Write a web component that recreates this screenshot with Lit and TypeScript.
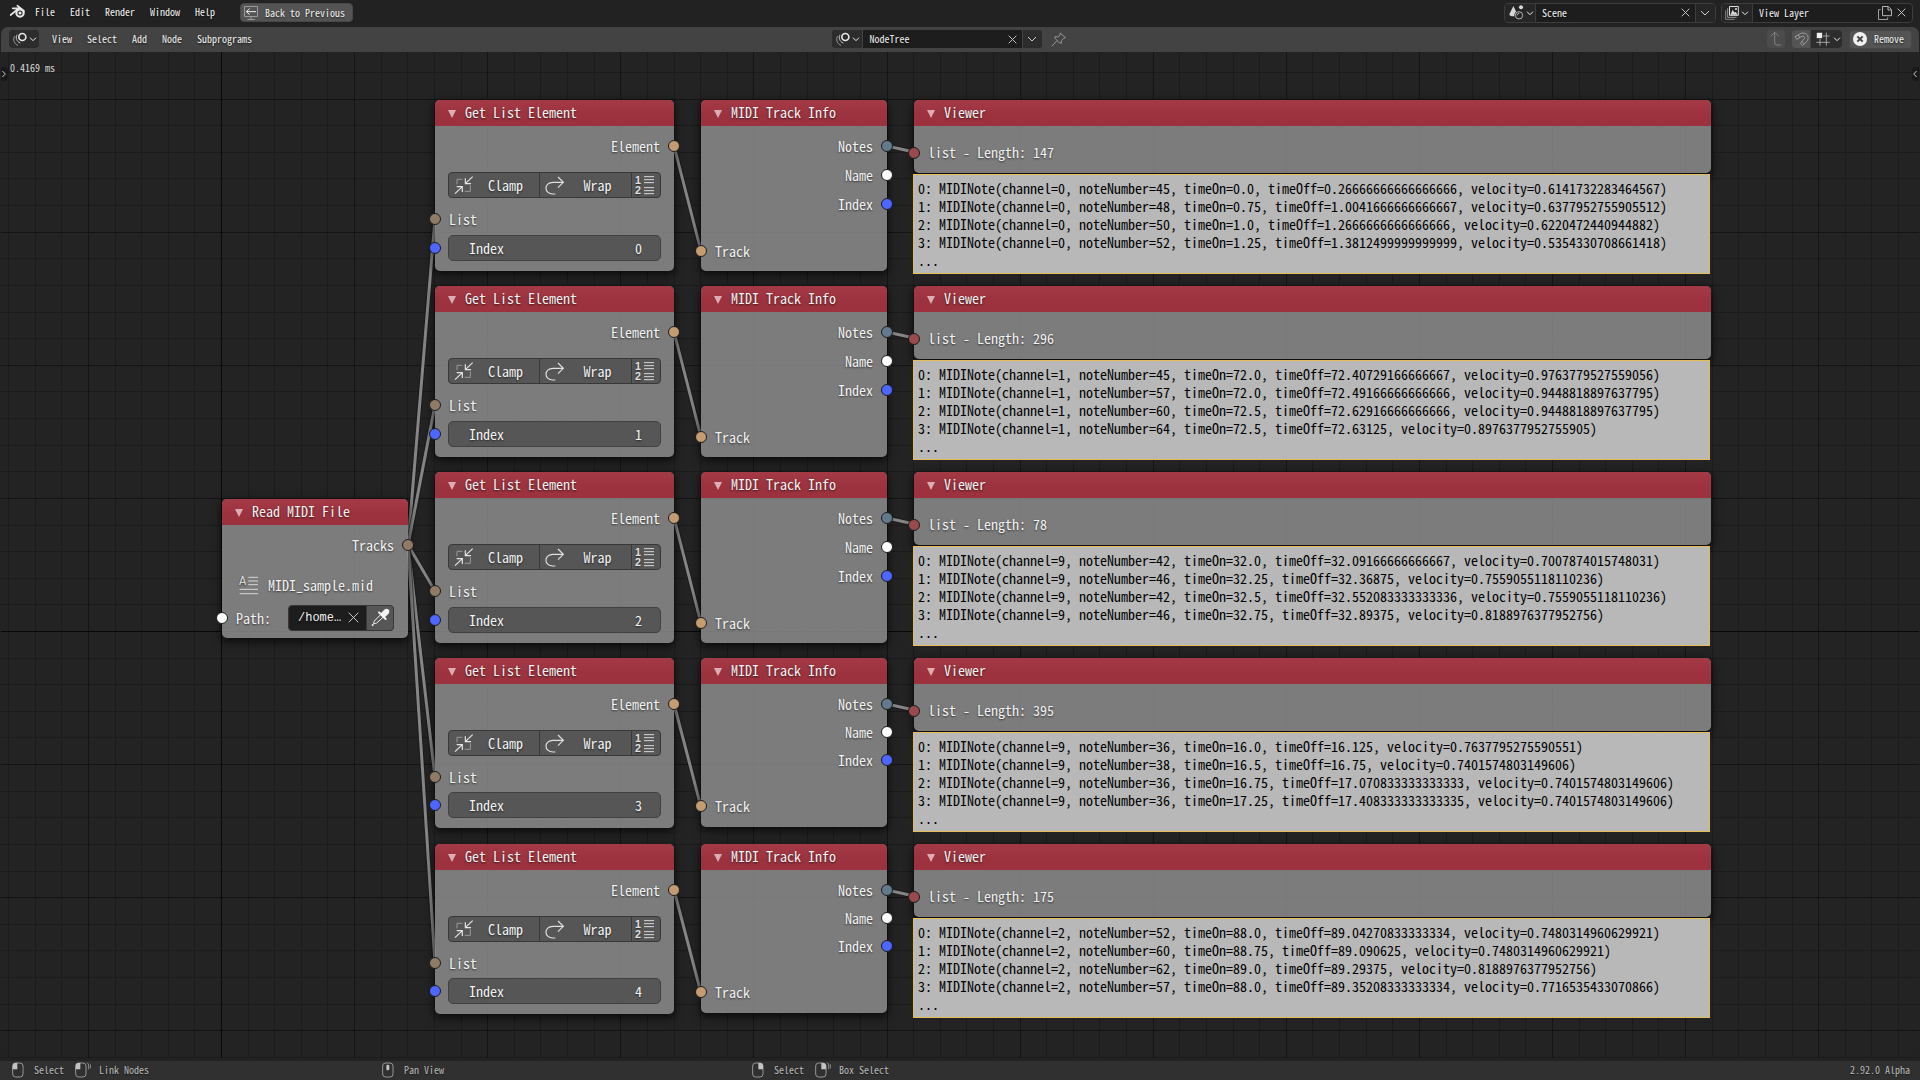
import { LitElement, html, svg, css, nothing } from "lit";
import type { SVGTemplateResult, TemplateResult } from "lit";
import { customElement } from "lit/decorators.js";
import { classMap } from "lit/directives/class-map.js";

/* Icons are drawn in a view box three units to the pixel. */
const icon = (w: number, h: number, body: SVGTemplateResult, x = 0, y = 0) => html`<svg
  class="icon"
  width=${w}
  height=${h}
  viewBox="${x} ${y} ${w * 3} ${h * 3}"
  fill="none"
  stroke="currentColor"
  stroke-width="3"
  aria-hidden="true"
>
  ${body}
</svg>`;

const logo = icon(16, 15, svg`
  <circle cx="30" cy="24" r="11" stroke-width="6.5" stroke="#e8e8e8"/>
  <circle cx="30" cy="24" r="4.6" fill="#e8e8e8" stroke="none"/>
  <path d="M8 10H30M22 2L42 18M2 30L22 13" stroke="#e8e8e8" stroke-width="5" stroke-linecap="round"/>`);
const backIcon = icon(14, 14, svg`
  <path d="M1.5 1.5H40.500V31.500H1.500ZM21 32V39M10 40.500H32" stroke="#a8a8a8" stroke-width="2.5"/>
  <path d="M7 17H36M17 8L7 17L17 26" stroke="#f0f0f0"/>`);
const treeIcon = icon(14, 14, svg`
  <circle cx="28" cy="15" r="10.500" stroke="#e6e6e6" stroke-width="5"/>
  <path d="M12 8C7 16 10 29 22 33" stroke="#c4c4c4"/>
  <path d="M5 12C-1 22 3 36 15 40" stroke="#999"/>`);
const chevron = icon(8, 8, svg`<path d="M3 8L12 17L21 8"/>`);
const chevronWide = icon(10, 8, svg`<path d="M3 6L15 18L27 6"/>`);
const cross = icon(9, 9, svg`<path d="M2 2L25 25M25 2L2 25" stroke-width="3"/>`);
const crossBig = icon(11, 11, svg`<path d="M2 2L31 31M31 2L2 31" stroke-width="3"/>`);
const pinIcon = icon(15, 15, svg`
  <path d="M28 3L43 17L38 19L31 26L31 34L26 33L12 19L12 14L20 15L27 9ZM18 26L2 43" stroke="#979797" stroke-width="3"/>`);
const sceneIcon = icon(15, 15, svg`
  <path d="M13 3L25 27Q24 34 13 34Q2 34 1 28Z" fill="#d8d8d8" stroke="none"/>
  <circle cx="36" cy="7" r="6" fill="#d8d8d8" stroke="none"/>
  <circle cx="30" cy="31" r="14" fill="#262626" stroke="none"/>
  <circle cx="30" cy="31" r="11" stroke="#d0d0d0" stroke-width="2.5"/>
  <path d="M24 31Q25 25 31 25" stroke="#d0d0d0" stroke-width="2.5"/>`);
const layerIcon = icon(14, 14, svg`
  <path d="M13.500 1.500H40V28H13.500Z" stroke="#dcdcdc" stroke-width="3"/>
  <path d="M16 26L23 12L29 20L32 17L38 26Z" fill="#dcdcdc" stroke="none"/>
  <circle cx="33" cy="9" r="3" fill="#dcdcdc" stroke="none"/>
  <path d="M8 7V34H35" stroke="#b0b0b0" stroke-width="2.500"/>
  <path d="M2 13V40H29" stroke="#999" stroke-width="2.500"/>`);
const copyIcon = icon(14, 14, svg`
  <path d="M13.500 1.500H31L40.500 11V29H13.500ZM30 2V12H40" stroke="#b4b4b4" stroke-width="3"/>
  <path d="M8 11H1.500V40.500H29V34" stroke="#a0a0a0" stroke-width="3"/>`);
const upIcon = icon(14, 16, svg`
  <path d="M17 4V36Q17 42 23 42H36M5 16L17 4L29 16" stroke="#828282" stroke-width="3"/>`);
const magnetIcon = icon(15, 15, svg`
  <path d="M3 14L19 5C32 -1 45 8 42 20C41 25 39 28 26 41L19 34L31 20C34 15 29 11 24 13L8 22ZM13 9L17 17M31 36L24 29" stroke="#a4a4a4" stroke-width="2.800"/>`);
const gridIcon = icon(14, 14, svg`
  <path d="M12 2V41M31 2V41M1 12H41M1 31H41" stroke="#a4a4a4" stroke-width="3"/>
  <rect x="1" y="1" width="18" height="18" fill="#f0f0f0" stroke="#2c2c2c" stroke-width="2"/>`);
const removeIcon = icon(14, 14, svg`
  <circle cx="21" cy="21" r="21" fill="#f0f0f0" stroke="none"/>
  <path d="M13 13L29 29M29 13L13 29" stroke="#444" stroke-width="6"/>`);
const clampIcon = icon(19, 19, svg`
  <path d="M9 25V10H25M49 28V46H32" stroke="#9a9a9a"/>
  <path d="M56 2L34 23M34 7V23H51M3 53L25 32M8 32H25V48" stroke="#e6e6e6" stroke-width="3.500"/>`);
const wrapIcon = icon(20, 19, svg`
  <path d="M31 54H24C-4 54 -4 19 24 19H55M39 3L55 19L39 35" stroke="#e0e0e0" stroke-width="3.500"/>`);
const orderIcon = icon(20, 20, svg`
  <text x="0" y="26" class="glyph" fill="#e0e0e0" stroke="none">1</text>
  <text x="0" y="58" class="glyph" fill="#e0e0e0" stroke="none">2</text>
  <path d="M27 5H57M27 14H57M27 23H57M27 38H57M27 47H57M27 56H57" stroke="#dadada" stroke-width="3"/>`);
const fileIcon = icon(20, 20, svg`
  <text x="0" y="31" class="glyph wide" fill="#d6d6d6" stroke="none">A</text>
  <path d="M28 7H57M28 18H57M28 29H57M2 43H57M2 56H57" stroke="#d6d6d6" stroke-width="3"/>`);
const dropperIcon = icon(19, 19, svg`
  <path d="M28 17L40 5Q46 0 52 4Q58 10 52 18L40 29Z" fill="#f4f4f4" stroke="none"/>
  <path d="M24 13L44 33" stroke="#f4f4f4" stroke-width="6" stroke-linecap="round"/>
  <path d="M28 21L10 39Q8 43 8 47Q13 47 17 45L36 28" stroke="#f4f4f4" stroke-width="3"/>
  <circle cx="5" cy="51" r="3" fill="#f4f4f4" stroke="none"/>`);
const triangle = icon(8, 8, svg`<path d="M0 0H24L12 24Z" fill="#dcaeb3" stroke="none"/>`);
const tabRight = icon(6, 8, svg`<path d="M4 3L13 12L4 21"/>`);
const tabLeft = icon(6, 8, svg`<path d="M14 3L5 12L14 21"/>`);

type MouseKind = "left" | "leftDrag" | "middle" | "right" | "rightDrag";
const mouse = (kind: MouseKind) => icon(kind.endsWith("Drag") ? 16 : 12, 16, svg`
  <rect x="2" y="3" width="31" height="42" rx="9" stroke="#a6a6a6" stroke-width="2.600"/>
  ${kind.startsWith("left") ? svg`<path d="M2 22V12Q2 3 11 3H16V22Z" fill="#c4c4c4" stroke="none"/>` : nothing}
  ${kind.startsWith("right") ? svg`<path d="M33 22V12Q33 3 24 3H19V22Z" fill="#c4c4c4" stroke="none"/>` : nothing}
  ${kind === "middle" ? svg`<rect x="13" y="8" width="9" height="17" rx="4" fill="#c4c4c4" stroke="none"/>` : nothing}
  ${kind.endsWith("Drag") ? svg`<path d="M37 2Q41 4 41 14V22M46 7V19" stroke="#a6a6a6" stroke-width="2.400"/>` : nothing}`);

interface TrackRow {
  y: number;
  compact: boolean;
  length: number;
  notes: string[];
}

const note = (channel: number, pitch: number, on: string, off: string, velocity: string) =>
  `MIDINote(channel=${channel}, noteNumber=${pitch}, timeOn=${on}, timeOff=${off}, velocity=${velocity})`;

const tracks: TrackRow[] = [
  {
    y: 48, compact: false, length: 147,
    notes: [
      note(0, 45, "0.0", "0.26666666666666666", "0.6141732283464567"),
      note(0, 48, "0.75", "1.0041666666666667", "0.6377952755905512"),
      note(0, 50, "1.0", "1.2666666666666666", "0.6220472440944882"),
      note(0, 52, "1.25", "1.3812499999999999", "0.5354330708661418"),
    ],
  },
  {
    y: 234, compact: false, length: 296,
    notes: [
      note(1, 45, "72.0", "72.40729166666667", "0.9763779527559056"),
      note(1, 57, "72.0", "72.49166666666666", "0.9448818897637795"),
      note(1, 60, "72.5", "72.62916666666666", "0.9448818897637795"),
      note(1, 64, "72.5", "72.63125", "0.8976377952755905"),
    ],
  },
  {
    y: 420, compact: false, length: 78,
    notes: [
      note(9, 42, "32.0", "32.09166666666667", "0.7007874015748031"),
      note(9, 46, "32.25", "32.36875", "0.7559055118110236"),
      note(9, 42, "32.5", "32.552083333333336", "0.7559055118110236"),
      note(9, 46, "32.75", "32.89375", "0.8188976377952756"),
    ],
  },
  {
    y: 606, compact: true, length: 395,
    notes: [
      note(9, 36, "16.0", "16.125", "0.7637795275590551"),
      note(9, 38, "16.5", "16.75", "0.7401574803149606"),
      note(9, 36, "16.75", "17.070833333333333", "0.7401574803149606"),
      note(9, 36, "17.25", "17.408333333333335", "0.7401574803149606"),
    ],
  },
  {
    y: 792, compact: true, length: 175,
    notes: [
      note(2, 52, "88.0", "89.04270833333334", "0.7480314960629921"),
      note(2, 60, "88.75", "89.090625", "0.7480314960629921"),
      note(2, 62, "89.0", "89.29375", "0.8188976377952756"),
      note(2, 57, "88.0", "89.35208333333334", "0.7716535433070866"),
    ],
  },
];

const place = (x: number, y: number) => `left:${x}px;top:${y}px`;

/* Canvas grid: lines every 26.6px around the origin, stronger every fifth. */
const gridLines = (() => {
  const out: SVGTemplateResult[] = [];
  const ox = 220.500, oy = 579, step = 26.620;
  const tone = (k: number) => (k === 0 ? "axis" : k % 5 === 0 ? "major" : "minor");
  const list: { k: number; x: boolean }[] = [];
  for (let k = -8; k < 140; k++) list.push({ k, x: true });
  for (let k = -21; k < 80; k++) list.push({ k, x: false });
  const rank = (k: number) => (k === 0 ? 2 : k % 5 === 0 ? 1 : 0);
  list.sort((a, b) => rank(a.k) - rank(b.k));
  for (const l of list) {
    const p = l.x ? Math.floor(ox + l.k * step) : Math.round(oy + l.k * step);
    out.push(l.x
      ? svg`<rect class=${tone(l.k)} x=${p} y="0" width="1" height="100%"/>`
      : svg`<rect class=${tone(l.k)} x="0" y=${p} width="100%" height="1"/>`);
  }
  return out;
})();

const links = (() => {
  const segs: number[][] = [];
  for (const t of tracks) {
    segs.push([407, 493, 434, t.y + 119]);
    segs.push([673, t.y + 46, 700, t.y + (t.compact ? 149 : 151)]);
    segs.push([886, t.y + 46, 913, t.y + 52]);
  }
  return segs.map(([a, b, c, d]) => svg`
    <line class="link-edge" x1=${a} y1=${b} x2=${c} y2=${d}/>
    <line class="link" x1=${a} y1=${b} x2=${c} y2=${d}/>`);
})();

const dot = (side: "in" | "out", tone: string) => html`<i class="dot ${side} ${tone}"></i>`;

const header = (title: string) => html`<header class="node-head">${triangle}<h2>${title}</h2></header>`;

@customElement("app-root")
export class AppRoot extends LitElement {
  static styles = css`
    :host {
      display: grid;
      grid-template-rows: 27px 25px minmax(1006px, 1fr) 3px 19px;
      min-height: 100vh;
      background: #222;
      color: #f0f0f0;
      font: 10px/14px "Noto Sans Mono CJK JP", "Noto Sans Mono CJK SC", "Liberation Sans Narrow", "Liberation Mono", monospace;
      overflow: hidden;
    }
    *, *::before { box-sizing: border-box; }
    .icon { display: block; flex: none; overflow: visible; }
    .glyph { font: bold 32px "Liberation Sans", sans-serif; }
    .glyph.wide { font: 36px "Liberation Mono", monospace; }
    button, input {
      font: inherit;
      color: inherit;
      margin: 0;
      padding: 0;
      border: 0;
      background: none;
      text-shadow: inherit;
      min-width: 0;
      outline: none;
    }
    button { display: flex; align-items: center; white-space: nowrap; }
    a { color: inherit; text-decoration: none; }
    .bar { display: flex; align-items: center; text-shadow: 0 1px 2px #000a; }
    .topbar { padding: 0 7px 2px 10px; }
    .menus { display: flex; gap: 15px; padding-bottom: 1px; }
    .topbar .menus { margin: 0 25px 0 9px; }
    .push { flex: 1; }
    .raised { height: 19px; border-radius: 4px; background: #545454; border: 1px solid #484848; padding: 0 7px 0 3px; gap: 7px; }
    .combo { display: flex; height: 20px; border: 1px solid #3d3d3d; border-radius: 4px; background: #1d1d1d; overflow: hidden; }
    .combo + .combo { margin-left: 5px; }
    .combo .kind { width: 31px; padding-left: 4px; gap: 2px; background: #262626; border-right: 1px solid #3d3d3d; }
    .combo input { width: 139px; padding-left: 6px; }
    .combo .clear { width: 20px; justify-content: center; color: #c0c0c0; }
    .combo .more { width: 20px; justify-content: center; padding-right: 2px; background: #262626; border-left: 1px solid #3d3d3d; color: #d0d0d0; }
    .combo.layers input { width: 121px; }
    .combo.layers .kind { padding-left: 3px; }
    .combo.layers .clear { width: 19px; padding-left: 3px; }
    .combo.layers .clear:last-child { padding: 0 2px 0 0; }
    .editbar { margin: 0 1px; padding: 0 7px 1px 8px; background: #434343; border-radius: 7px 7px 0 0; }
    .editbar .menus { margin-left: 13px; padding: 0; }
    .dark { height: 18px; border-radius: 4px; background: #2c2c2c; padding-left: 4px; gap: 2px; width: 30px; }
    .editbar .combo { height: 18px; border: 0; }
    .editbar .combo .kind, .editbar .combo .more { background: #2c2c2c; border-color: #434343; }
    .before { flex: 29; }
    .after { flex: 35; }
    .pin { margin-left: 9px; }
    .square { height: 18px; width: 18px; justify-content: center; border-radius: 4px; background: #4c4c4c; margin-right: 7px; }
    .square.snap { margin-right: 1px; border-radius: 4px 0 0 4px; background: #545454; }
    .snapto { width: 31px; border-radius: 0 4px 4px 0; margin-right: 7px; padding-left: 5px; gap: 3px; }

    .canvas { position: relative; margin: 0 1px; background: #232323; overflow: hidden; border-radius: 0 0 6px 6px; }
    .backdrop { position: absolute; inset: 0; width: 100%; height: 100%; }
    .minor { fill: #1b1b1b; }
    .major { fill: #141414; }
    .axis { fill: #080808; }
    .link-edge { stroke: #1616168c; stroke-width: 5; }
    .link { stroke: #858585; stroke-width: 3; }
    .timing { position: absolute; left: 9px; top: 9px; color: #d8d8d8; margin: 0; }
    .tab { position: absolute; top: 15px; width: 7px; height: 14px; background: #191919; color: #c8c8c8; }
    .tab.left { left: 0; border-radius: 0 4px 4px 0; }
    .tab.right { right: 0; border-radius: 4px 0 0 4px; }

    .node {
      position: absolute;
      font-size: 14px;
      line-height: 18px;
      text-shadow: 0 1px 2px #0009;
      color: #f2f2f2;
      white-space: nowrap;
    }
    .card { border-radius: 5px; background: #8b8b8bda; box-shadow: 0 3px 8px 1px #000a; position: relative; }
    .read { width: 186px; }
    .get { width: 239px; }
    .info { width: 186px; }
    .viewer { width: 797px; }
    .node-head {
      display: flex;
      align-items: center;
      gap: 9px;
      height: 26px;
      padding: 0 0 2px 13px;
      border-radius: 5px 5px 0 0;
      background: linear-gradient(#a43a46, #9b323d 60%);
    }
    .node-head .icon { margin-top: 3px; }
    h2 { margin: 0; font: inherit; }
    .body { display: flex; flex-direction: column; padding: 5px 0 9px; }
    .row { display: flex; align-items: center; height: 29px; padding: 0 14px; position: relative; }
    .compact .short { height: 28px; }
    .end { justify-content: flex-end; }
    .gap { margin-top: 18px; }
    .info .body { padding-bottom: 6px; }
    .compact .info-body.body { padding-bottom: 7px; }
    .dot {
      position: absolute;
      top: calc(50% - 6px);
      width: 12px;
      height: 12px;
      border-radius: 50%;
      border: 1px solid #1c1c1c;
    }
    .in { left: -6px; }
    .out { right: -6px; }
    .tan { background: #c39c72; }
    .dull { background: #8f7a66; }
    .blue { background: #4d66ff; }
    .white { background: #fff; }
    .steel { background: #64798d; }
    .red { background: #994a4c; }
    .modes { display: flex; height: 26px; margin: 12px 13px 6px; border: 1px solid #383838; border-radius: 4px; background: #565656; }
    .modes button { flex: 92; padding-left: 5px; gap: 15px; }
    .modes button + button { border-left: 1px solid #383838; gap: 18px; }
    .modes button.order { flex: 27; padding-left: 3px; }
    .indexrow { padding: 0 13px; }
    .number {
      flex: 1;
      display: flex;
      align-items: center;
      height: 26px;
      padding: 0 18px 0 20px;
      border: 1px solid #414141;
      border-radius: 5px;
      background: #565656;
    }
    .number input { flex: 1; text-align: right; }
    .file { margin-top: 11px; padding-left: 17px; gap: 9px; }
    .pathrow { margin-top: 4px; }
    .pathrow label { flex: 1; }
    .path { display: flex; width: 106px; height: 26px; border: 1px solid #383838; border-radius: 4px; background: #1d1d1d; overflow: hidden; }
    .path input { flex: 1; padding-left: 9px; font: 12px/18px "Liberation Mono", monospace; }
    .path button { width: 18px; color: #c8c8c8; }
    .path .pick { width: 27px; justify-content: center; background: #565656; border-left: 1px solid #383838; }
    .read .body { padding-bottom: 6px; }
    .viewer .body { padding: 12px 0 6px; }
    .viewer .row { padding-bottom: 1px; }
    .dump {
      margin: 1px 1px 0 -1px;
      padding: 4px;
      border: 1px solid #e6bd55;
      background: #b8b8b8;
      color: #000;
      text-shadow: none;
      font: inherit;
      position: relative;
    }
    .status { grid-row: 5; display: grid; grid-template-columns: 370fr 370fr 1158fr; align-items: center; padding: 0 10px 2px 12px; background: #303030; color: #bababa; text-shadow: 0 1px 1px #0008; }
    .status div { display: flex; align-items: center; }
    .hint { margin: 0 11px 0 10px; }
    .hint.drag { margin-left: 8px; }
  `;

  private combo(kindIcon: TemplateResult, kindLabel: string, name: string, value: string) {
    return html`<div class="combo">
      <button class="kind" aria-label=${kindLabel}>${kindIcon}${chevron}</button>
      <input aria-label=${name} .value=${value} />
      <button class="clear" aria-label="Unlink">${cross}</button>
      <button class="more" aria-label="Browse">${chevronWide}</button>
    </div>`;
  }

  private trackNodes(t: TrackRow, i: number) {
    const compact = { compact: t.compact };
    return html`
      <section class="node get ${classMap(compact)}" style=${place(434, t.y)}>
        <div class="card">
          ${header("Get List Element")}
          <div class="body">
            <div class="row end">Element${dot("out", "tan")}</div>
            <div class="modes">
              <button>${clampIcon}Clamp</button>
              <button>${wrapIcon}Wrap</button>
              <button class="order" aria-label="Multiple elements">${orderIcon}</button>
            </div>
            <div class="row">List${dot("in", "dull")}</div>
            <div class="row indexrow short">
              <div class="number">
                <label for="index-${i}">Index</label>
                <input id="index-${i}" size="2" .value=${String(i)} />
              </div>
              ${dot("in", "blue")}
            </div>
          </div>
        </div>
      </section>
      <section class="node info ${classMap(compact)}" style=${place(700, t.y)}>
        <div class="card">
          ${header("MIDI Track Info")}
          <div class="body info-body">
            <div class="row end">Notes${dot("out", "steel")}</div>
            <div class="row end short">Name${dot("out", "white")}</div>
            <div class="row end short">Index${dot("out", "blue")}</div>
            <div class="row gap short">Track${dot("in", "tan")}</div>
          </div>
        </div>
      </section>
      <section class="node viewer" style=${place(913, t.y)}>
        <div class="card">
          ${header("Viewer")}
          <div class="body">
            <div class="row">list - Length: ${t.length}${dot("in", "red")}</div>
          </div>
        </div>
        <pre class="dump">${t.notes.map((n, k) => `${k}: ${n}\n`).join("")}...</pre>
      </section>`;
  }

  render() {
    return html`
      <div class="bar topbar">
        ${logo}
        <nav class="menus">
          ${["File", "Edit", "Render", "Window", "Help"].map((m) => html`<a href="#">${m}</a>`)}
        </nav>
        <button class="raised">${backIcon}Back to Previous</button>
        <span class="push"></span>
        ${this.combo(sceneIcon, "Scene type", "Scene name", "Scene")}
        <div class="combo layers">
          <button class="kind" aria-label="View layer type">${layerIcon}${chevron}</button>
          <input aria-label="View layer name" .value=${"View Layer"} />
          <button class="clear" aria-label="Duplicate">${copyIcon}</button>
          <button class="clear" aria-label="Remove view layer">${cross}</button>
        </div>
      </div>
      <div class="bar editbar">
        <button class="dark" aria-label="Editor type">${treeIcon}${chevron}</button>
        <nav class="menus">
          ${["View", "Select", "Add", "Node", "Subprograms"].map((m) => html`<a href="#">${m}</a>`)}
        </nav>
        <span class="before"></span>
        ${this.combo(treeIcon, "Node tree type", "Node tree name", "NodeTree")}
        <button class="pin" aria-label="Pin">${pinIcon}</button>
        <span class="after"></span>
        <button class="square" aria-label="Parent tree">${upIcon}</button>
        <button class="square snap" aria-label="Snap">${magnetIcon}</button>
        <button class="dark snapto" aria-label="Snap to">${gridIcon}${chevron}</button>
        <button class="raised">${removeIcon}Remove</button>
      </div>
      <main class="canvas">
        <svg class="backdrop" shape-rendering="crispEdges" aria-hidden="true">${gridLines}</svg>
        <svg class="backdrop" aria-hidden="true">${links}</svg>
        <p class="timing">0.4169 ms</p>
        <button class="tab left" aria-label="Show toolbar">${tabRight}</button>
        <button class="tab right" aria-label="Show sidebar">${tabLeft}</button>
        <section class="node read" style=${place(221, 447)}>
          <div class="card">
            ${header("Read MIDI File")}
            <div class="body">
              <div class="row end">Tracks${dot("out", "dull")}</div>
              <div class="row file">${fileIcon}MIDI_sample.mid</div>
              <div class="row pathrow">
                <label for="path">Path:</label>
                <div class="path">
                  <input id="path" .value=${"/home…"} />
                  <button aria-label="Clear path">${crossBig}</button>
                  <button class="pick" aria-label="Pick path">${dropperIcon}</button>
                </div>
                ${dot("in", "white")}
              </div>
            </div>
          </div>
        </section>
        ${tracks.map((t, i) => this.trackNodes(t, i))}
      </main>
      <footer class="status">
        <div>
          ${mouse("left")}<span class="hint">Select</span>
          ${mouse("leftDrag")}<span class="hint drag">Link Nodes</span>
        </div>
        <div>${mouse("middle")}<span class="hint">Pan View</span></div>
        <div>
          ${mouse("right")}<span class="hint">Select</span>
          ${mouse("rightDrag")}<span class="hint drag">Box Select</span>
          <span class="push"></span>
          <span>2.92.0 Alpha</span>
        </div>
      </footer>
    `;
  }
}
